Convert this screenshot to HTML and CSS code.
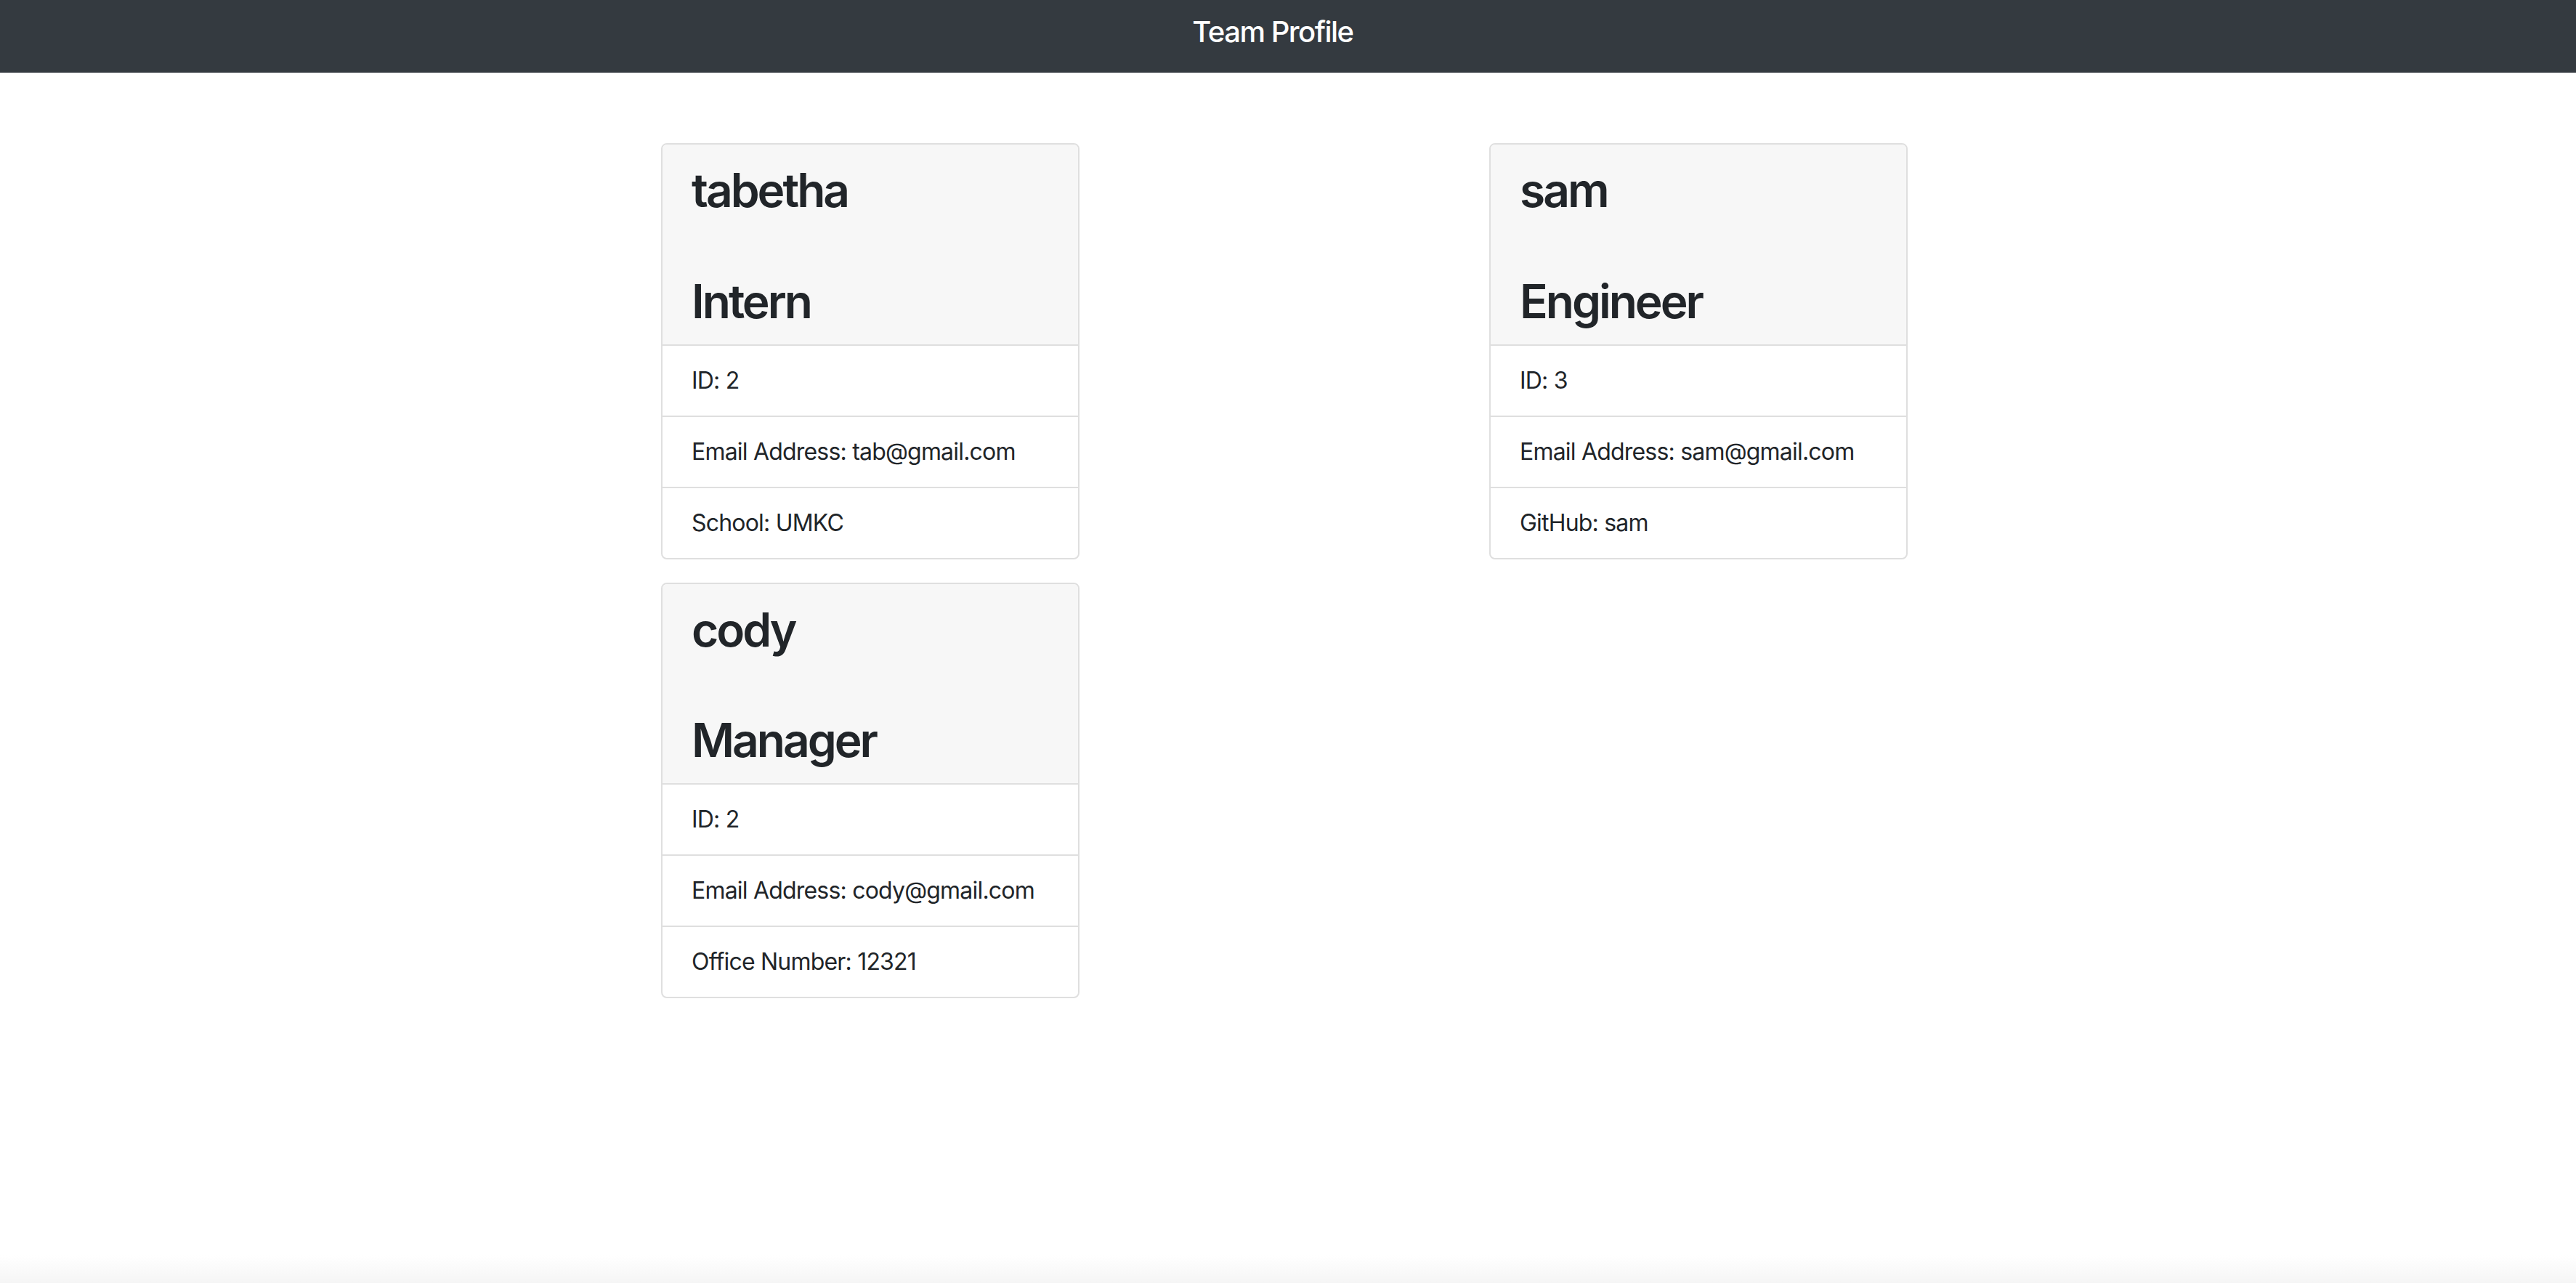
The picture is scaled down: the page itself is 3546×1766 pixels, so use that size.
FILE: index.html
```html
<!DOCTYPE html>
<html lang="en">
<head>
    <meta charset="UTF-8">
    <meta name="viewport" content="width=device-width, initial-scale=1.0">
    <title>Team Profile</title>
    <link rel="stylesheet" href="styles.css">
</head>
<body>
    <nav class="navbar">
        <span class="navbar-brand">Team Profile</span>
    </nav>

    <div class="team">
        <div class="team-col">
            <div class="card">
                <div class="card-header">
                    <h2 class="card-name">tabetha</h2>
                    <h2 class="card-role">Intern</h2>
                </div>
                <ul class="list-group">
                    <li class="list-group-item">ID: 2</li>
                    <li class="list-group-item">Email Address: tab@gmail.com</li>
                    <li class="list-group-item">School: UMKC</li>
                </ul>
            </div>

            <div class="card">
                <div class="card-header">
                    <h2 class="card-name">cody</h2>
                    <h2 class="card-role">Manager</h2>
                </div>
                <ul class="list-group">
                    <li class="list-group-item">ID: 2</li>
                    <li class="list-group-item">Email Address: cody@gmail.com</li>
                    <li class="list-group-item">Office Number: 12321</li>
                </ul>
            </div>
        </div>

        <div class="team-col">
            <div class="card">
                <div class="card-header">
                    <h2 class="card-name">sam</h2>
                    <h2 class="card-role">Engineer</h2>
                </div>
                <ul class="list-group">
                    <li class="list-group-item">ID: 3</li>
                    <li class="list-group-item">Email Address: sam@gmail.com</li>
                    <li class="list-group-item">GitHub: sam</li>
                </ul>
            </div>
        </div>
    </div>
</body>
</html>
```

FILE: styles.css
```css
html {
    height: 100%;
}
body {
    font-family: 'Inter', 'Liberation Sans', sans-serif;
    margin: 0;
    padding: 0;
    min-height: 100%;
    color: #212529;
    background: linear-gradient(to bottom, #ffffff calc(100% - 38px), #f5f5f5 100%);
}
.navbar {
    background-color: #343a40;
    height: 100px;
    box-sizing: border-box;
    padding-top: 14px;
    display: flex;
    justify-content: center;
}
.navbar-brand {
    color: #fff;
    font-size: 40px;
    line-height: 60px;
    font-weight: 500;
    letter-spacing: -1.5px;
    margin-right: 42px;
}
.team {
    display: grid;
    grid-template-columns: 576px 576px;
    column-gap: 564px;
    justify-content: center;
    padding: 97px 10px 0 0;
}
.team-col {
    display: flex;
    flex-direction: column;
    gap: 32px;
}
.card {
    border: 2px solid #dfdfdf;
    border-radius: 8px;
    background-color: #fff;
    overflow: hidden;
}
.card-header {
    background-color: #f7f7f7;
    border-bottom: 2px solid #dfdfdf;
    padding: 25px 40px 20px;
}
.card-header h2 {
    margin: 0;
    font-size: 64px;
    line-height: 76.8px;
    font-weight: 600;
    letter-spacing: -3px;
}
.card-name {
    margin-bottom: 76px !important;
}
.list-group {
    list-style: none;
    margin: 0;
    padding: 0;
}
.list-group-item {
    padding: 24px 40px;
    font-size: 32px;
    line-height: 48px;
    letter-spacing: -0.8px;
}
.list-group-item + .list-group-item {
    border-top: 2px solid #dfdfdf;
}
```
